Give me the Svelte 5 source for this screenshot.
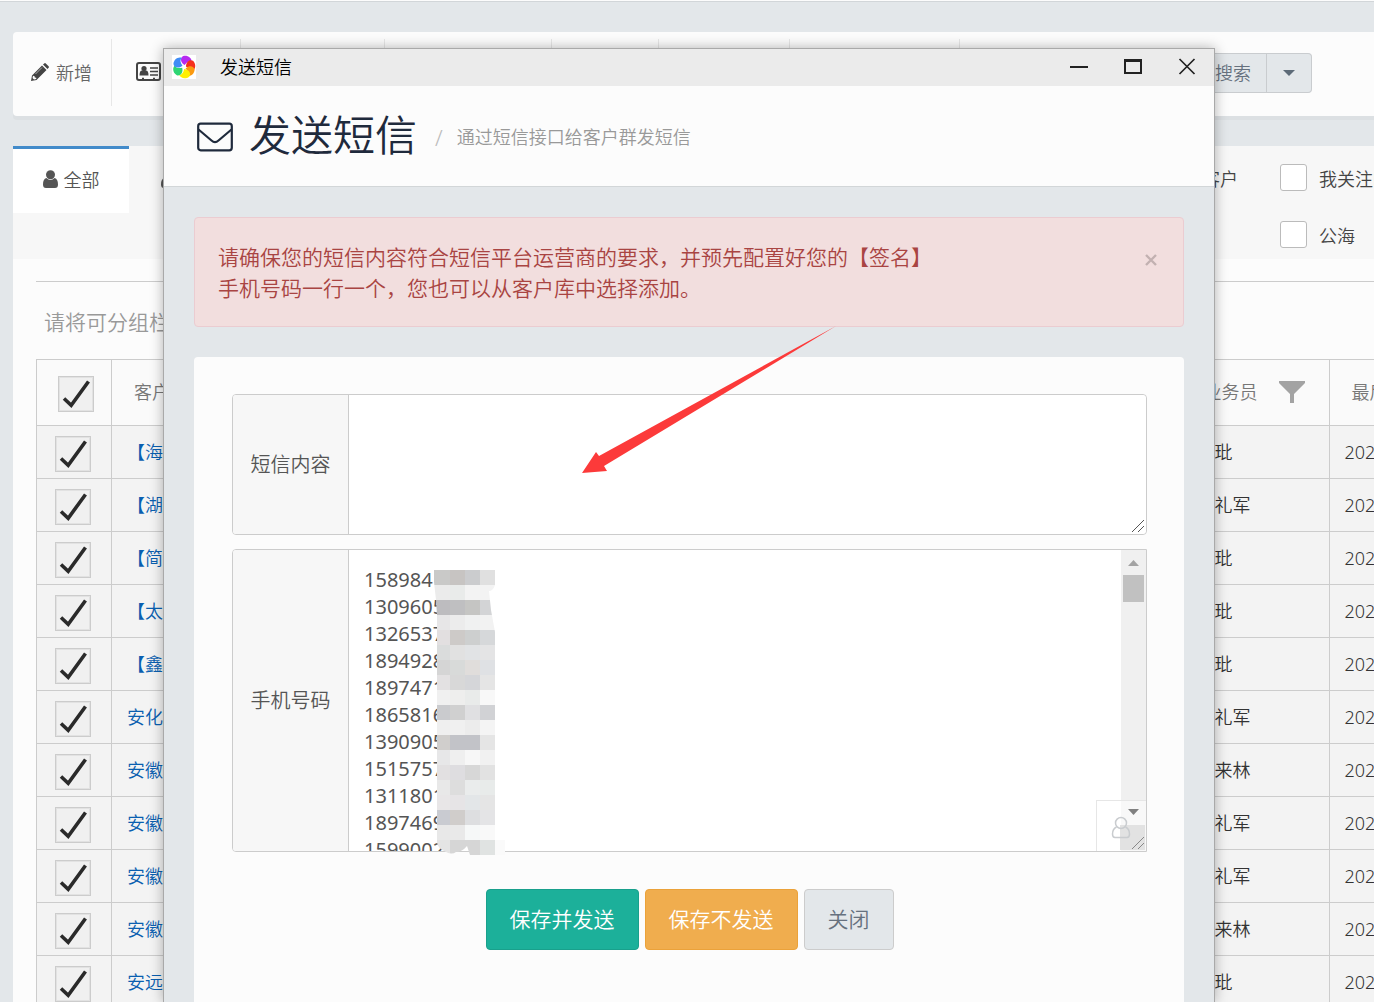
<script>
  const toolSlots = [129, 144, 167, 107, 131, 170];
  const rows = [
    ['【海南客户】', '张玭'],
    ['【湖南客户】', '周礼军'],
    ['【简单客户】', '张玭'],
    ['【太平客户】', '张玭'],
    ['【鑫源客户】', '张玭'],
    ['安化县客户', '周礼军'],
    ['安徽客户一', '周来林'],
    ['安徽华客户', '周礼军'],
    ['安徽省客户', '周礼军'],
    ['安徽新客户', '周来林'],
    ['安远县客户', '张玭']
  ];
  const phones = ['158984', '1309605', '1326537', '1894928', '1897471', '1865816', '1390905', '1515757', '1311801', '1897469', '1599002'].join('\n');
  const mosaic = [
    'c9c9c8 c7c4c2 cbccce e0e0e0',
    'ebebeb e9ebea f3f3f3 f3f3f3',
    'bdbcbf bfbfc1 c5c5c3 d3d4d6',
    'e7e6e7 ececec f0f1f1 f2f2f2',
    'e2dfe0 cdcac8 cdcfcf d6d8da',
    'dadcdc e1e1e1 e1e3e5 e4e4e5',
    'd5d5d5 d8dad9 e0dddb dfe1e4',
    'e3e1e2 d8d8d8 d5d6d9 e5e5e5',
    'f0f0f0 eeeeed e9ebea f8f8f8',
    'cacbce d0d0d0 e0e0e2 d1d2d5',
    'efefef f0f0f0 ececec f4f4f4',
    'd0cecc c2c3c8 c2c3c8 e5e5e5',
    'e7e7e8 efefef f7f7f7 f1f1f1',
    'e2e0e1 dedde0 d7d7d7 e2e2e2',
    'e8e8e8 dddddd eaecec e8ebea',
    'e8e6e7 e6e4e6 e3e6e8 e5e5e5',
    'c9cbd1 d0cdcb dddee0 e4e4e6',
    'e8e8e8 e9e9e9 f6f8f8 f9f9f9',
    'e4e4e4 d6d6d6 d6d6d6 e0e3e2'
  ].map((line) => line.split(' ').map((c) => '#' + c));
  const petals = [
    [20, '#b62af0'], [80, '#f5301c'], [128, '#fb9a10'], [176, '#fff000'], [245, '#2ed573'], [310, '#3f8cf5']
  ];
</script>

{#snippet check()}
  <svg class="tick" viewBox="0 0 36 36" aria-hidden="true">
    <path d="M6 22.500 L13.200 29.200 L30.500 5.500" fill="none" stroke="#2a2a2a" stroke-width="3.600" />
  </svg>
{/snippet}

{#snippet person()}
  <svg class="person" viewBox="0 0 15 18" aria-hidden="true">
    <circle cx="7.5" cy="4.7" r="4.5" fill="#555" />
    <path d="M3.4 8 C1 8.600 0 11 0 14.500 C0 17 1 18 3 18 H12 C14 18 15 17 15 14.500 C15 11 14 8.600 11.600 8 C9 10.600 6 10.600 3.400 8Z" fill="#555" />
  </svg>
{/snippet}

<div class="page">
  <nav class="toolbar">
    <button class="tool first">
      <svg width="18" height="18" viewBox="0 0 18 18" aria-hidden="true">
        <path d="M0 18 L1 12.500 L11 2.500 L15.500 7 L5.500 17Z M12 1.500 L13.200 .4 Q14 -.3 14.800 .4 L17.600 3.200 Q18.300 4 17.600 4.800 L16.500 6Z" fill="#444" />
        <path d="M2 12.800 L3.600 13.200 L3.800 14.500 L5.200 14.700 L5.300 16 L3 16.500 L1.500 15Z" fill="#fcfcfc" />
        <path d="M4.500 11 L11 4.500" stroke="#aaa" stroke-width="1" />
      </svg>
      <span>新增</span>
    </button>
    {#each toolSlots as w, i}
      <button class="tool" style:width="{w}px" aria-label="工具 {i + 1}">
        {#if i === 0}
          <svg width="25" height="19" viewBox="0 0 25 19" aria-hidden="true">
            <rect x="1" y="1" width="23" height="17" rx="2" fill="none" stroke="#444" stroke-width="2" />
            <circle cx="8" cy="6.500" r="2.600" fill="#444" />
            <path d="M3.500 13.500 Q3.500 8.500 6 8.500 H10 Q12.500 8.500 12.500 13.500Z" fill="#444" />
            <path d="M14 6 H22 M14 9.500 H22 M14 13 H22" stroke="#444" stroke-width="1.500" />
            <path d="M6 16.500 H8 M17 16.500 H19" stroke="#444" stroke-width="1.500" />
          </svg>
        {/if}
      </button>
    {/each}
    <div class="search">
      <button class="go">搜索</button>
      <button class="more" aria-label="更多"><svg width="12" height="6" viewBox="0 0 12 6"><path d="M0 0H12L6 6Z" fill="#5d6b78" /></svg></button>
    </div>
  </nav>

  <section class="tabs">
    <button class="tab active">{@render person()}<span>全部</span></button>
    <button class="tab" aria-label="客户分类">{@render person()}</button>
    <div class="filters">
      <span class="mine">客户</span>
      <label><input type="checkbox" /><span>我关注的</span></label>
      <label class="second"><input type="checkbox" /><span>公海</span></label>
    </div>
  </section>

  <main class="content">
    <p class="group">请将可分组栏拖到此处</p>
    <table>
      <colgroup><col class="c-check" /><col /><col class="c-sales" /><col class="c-date" /></colgroup>
      <thead>
        <tr>
          <th class="ch"><label class="box"><input type="checkbox" checked aria-label="全选" />{@render check()}</label></th>
          <th>客户名称</th>
          <th>
            <span class="sales">业务员
              <svg width="28" height="23" viewBox="0 0 28 23" aria-hidden="true"><path d="M1 0H27V2L16 13V22H12V13L1 2Z" fill="#a3a3a3" /></svg>
            </span>
          </th>
          <th>最后跟进</th>
        </tr>
      </thead>
      <tbody>
        {#each rows as [name, sales]}
          <tr>
            <td class="ch"><label class="box"><input type="checkbox" checked aria-label={name} />{@render check()}</label></td>
            <td><a href="#customer">{name}</a></td>
            <td>{sales}</td>
            <td>2021-01</td>
          </tr>
        {/each}
      </tbody>
    </table>
  </main>

  <div class="window" role="dialog" aria-label="发送短信">
    <header class="titlebar">
      <svg class="logo" viewBox="-12 -12 24 24" aria-hidden="true">
        <rect x="-12" y="-12" width="24" height="24" fill="#fff" />
        {#each petals as [angle, color]}
          <path d="M0 -2 C-5 -3 -7 -7 -4.500 -10 C-1 -12.500 4 -11.500 5.500 -7.500 C3 -8 1 -6 0 -2Z" fill={color} transform="rotate({angle})" />
        {/each}
      </svg>
      <span class="caption">发送短信</span>
      <button class="ctl" aria-label="最小化"><svg viewBox="0 0 18 18"><path d="M0 9H18" stroke="#222" stroke-width="2" /></svg></button>
      <button class="ctl" aria-label="最大化"><svg viewBox="0 0 18 18"><path d="M1 2V15H17V2" fill="none" stroke="#222" stroke-width="2" /><path d="M0 2.500H18" stroke="#222" stroke-width="3" /></svg></button>
      <button class="ctl" aria-label="关闭窗口"><svg viewBox="0 0 18 18"><path d="M1.500 1L16.500 16M16.500 1L1.500 16" stroke="#222" stroke-width="1.700" /></svg></button>
    </header>

    <div class="heading">
      <svg width="36" height="30" viewBox="0 0 36 30" aria-hidden="true">
        <rect x="1.200" y="1.700" width="33.600" height="26.600" rx="2.500" fill="none" stroke="#1f2a3c" stroke-width="2.200" />
        <path d="M1.500 7.500 L14.500 18.500 C17 20.800 19 20.800 21.500 18.500 L34.500 7.500" fill="none" stroke="#1f2a3c" stroke-width="2.200" />
      </svg>
      <h1>发送短信</h1>
      <small class="slash">/</small>
      <small>通过短信接口给客户群发短信</small>
    </div>

    <div class="body">
      <div class="alert" role="alert">
        <p>请确保您的短信内容符合短信平台运营商的要求，并预先配置好您的【签名】<br />手机号码一行一个，您也可以从客户库中选择添加。</p>
        <button aria-label="关闭提示"><svg width="12" height="12" viewBox="0 0 12 12"><path d="M1 1L11 11M11 1L1 11" stroke="#c2b1b1" stroke-width="2.400" /></svg></button>
        <svg class="arrow" width="254" height="148" viewBox="0 0 254 148" aria-hidden="true">
          <path d="M254 0 L17 130 L14 126 L0 147 L25 145 L22 140Z" fill="#fc3a3a" />
        </svg>
      </div>

      <form class="panel" onsubmit={(e) => e.preventDefault()}>
        <div class="field short">
          <label for="sms">短信内容</label>
          <textarea id="sms"></textarea>
          <svg class="grip" viewBox="0 0 12 12" aria-hidden="true"><path d="M0 12L12 0M6 12L12 6" stroke="#555" stroke-width="1" /></svg>
        </div>
        <div class="field tall">
          <label for="phones">手机号码</label>
          <textarea id="phones" value={phones}></textarea>
          <div class="bar" aria-hidden="true">
            <svg width="11" height="6" viewBox="0 0 11 6"><path d="M0 6H11L5.500 0Z" fill="#a3a3a3" /></svg>
            <span class="thumb"></span>
          </div>
          <svg class="mosaic" width="71" height="285" viewBox="0 0 71 285" aria-hidden="true">
            <clipPath id="smudge"><path d="M0 0H61V15Q59 21 55 21L57 40L61 62V270H71V285H36L33 276Q28 282 22 282Q18 285 12 282Q3 278 3 272V45L2 30L0 12Z" /></clipPath>
            <g clip-path="url(#smudge)">
              <rect x="61" y="270" width="10" height="15" fill="#fafafa" />
              {#each mosaic as line, r}
                {#each line as color, c}
                  <rect x={c ? 1 + c * 15 : 0} y={r * 15} width={c ? 15 : 16} height="15" fill={color} />
                {/each}
              {/each}
            </g>
          </svg>
          <button type="button" class="pick" aria-label="选择客户">
            <svg width="49" height="50" viewBox="0 0 49 50">
              <rect x="23" y="24" width="25" height="25" fill="#e2e2e2" />
              <path d="M31 8H42L36.500 14Z" fill="#808080" />
              <g fill="none" stroke="#c9cccf" stroke-width="1.500"><circle cx="24" cy="22" r="5.500" /><path d="M19.500 26Q15.500 28 15.500 33Q15.500 36.500 18 36.500H30Q32.500 36.500 32.500 33Q32.500 28 28.500 26" /></g>
              <path d="M35 48L47 36M41 48L47 42" stroke="#888" stroke-width="1" />
            </svg>
          </button>
        </div>
        <div class="actions">
          <button class="send">保存并发送</button>
          <button class="save">保存不发送</button>
          <button class="close">关闭</button>
        </div>
      </form>
    </div>
  </div>
</div>

<style>
  :global(body) { margin: 0; }
  .page, .page * { box-sizing: border-box; }
  .page {
    position: relative;
    height: 100vh;
    overflow: hidden;
    background: #e3e7ea;
    border-top: 1px solid #fcfcfc;
    box-shadow: inset 0 1px 0 #d2d6d9;
    padding: 31px 0 0 13px;
    font-family: "Noto Sans", "Noto Sans CJK SC", sans-serif;
    font-size: 18px;
    font-weight: 350;
    color: #444;
  }
  button { font: inherit; color: inherit; border: 0; background: none; padding: 0; margin: 0; display: flex; align-items: center; justify-content: center; }
  textarea { font: inherit; border: 0; outline: 0; resize: none; margin: 0; background: #fff; color: #555; overflow: hidden; }
  p, h1 { margin: 0; font-weight: inherit; }

  .toolbar { height: 84px; display: flex; padding: 7px 62px 10px 0; background: #fcfcfc; border-radius: 4px 0 0 4px; box-shadow: 0 4px 0 #dce0e3; }
  .tool { flex: none; border-right: 1px solid #e7e7e7; justify-content: flex-start; padding: 0 0 2px 24px; }
  .first { width: 99px; padding-left: 18px; gap: 7px; color: #666; }
  .search { margin: 14px 0 0 auto; height: 40px; display: flex; color: #66717e; }
  .search button { border: 1px solid #c9cccf; background: #e3e7ea; padding-bottom: 2px; }
  .search .go { width: 74px; justify-content: flex-end; padding-right: 15px; }
  .search .more { width: 45px; border-left: 0; border-radius: 0 4px 4px 0; padding: 0; }

  .tabs { margin-top: 30px; height: 113px; background: #f7f7f7; display: flex; align-items: flex-start; }
  .tab { height: 67px; width: 116px; gap: 6px; border-top: 3px solid transparent; color: #555; padding-bottom: 4px; }
  .tab:not(.active) { justify-content: flex-start; padding-left: 32px; }
  .active { background: #fff; border-top-color: #428bca; }
  .person { width: 15px; height: 18px; }
  .filters { margin: 18px 0 0 auto; display: grid; grid-template-columns: 66px 94px; row-gap: 30px; align-items: center; overflow: hidden; }
  .filters label { display: flex; align-items: center; gap: 12px; white-space: nowrap; height: 27px; }
  .filters input { appearance: none; flex: none; margin: 0; width: 27px; height: 27px; border: 1px solid #bbb; border-radius: 3px; background: #fff; }
  .filters .second { grid-column: 2; }
  .mine { margin-left: -12px; }

  .content { background: #fcfcfc; padding: 22px 0 0 23px; }
  .group { height: 78px; border-top: 1px solid #ccc; padding: 24px 0 0 8px; font-size: 21px; line-height: 32px; color: #999; }
  table { width: 100%; table-layout: fixed; border-collapse: collapse; background: #f3f3f3; color: #333; }
  .c-check { width: 75px; }
  .c-sales { width: 148px; }
  .c-date { width: 45px; }
  th, td { border: 1px solid #ccc; border-right-width: 0; overflow: hidden; white-space: nowrap; text-align: left; font-weight: inherit; padding: 0 0 1px 15px; height: 53px; line-height: 24px; }
  th { height: 66px; background: #fafafa; color: #777; padding-left: 22px; }
  td a { color: #0a5fb0; text-decoration: none; }
  .ch { padding: 0 0 0 18px; }
  th.ch { padding-left: 21px; }
  .sales { display: flex; align-items: center; gap: 20px; }
  .box { display: grid; width: 36px; height: 36px; margin-top: 3px; }
  .box input { appearance: none; grid-area: 1 / 1; margin: 0; border: 1px solid #ccc; background: #f0f0f0; box-shadow: inset 0 0 0 1px #e2e2e2; }
  .tick { grid-area: 1 / 1; width: 36px; height: 36px; }

  .window { position: absolute; top: 47px; left: 163px; right: 159px; bottom: 0; display: flex; flex-direction: column; border: 1px solid #a9a9a9; border-bottom: 0; background: #e3e7ea; box-shadow: 0 0 12px rgba(0, 0, 0, 0.3); }
  .titlebar { height: 37px; flex: none; display: flex; align-items: center; background: #ebebeb; padding: 0 18px 1px 8px; color: #000; }
  .logo { width: 24px; height: 24px; }
  .caption { margin: 0 auto 0 24px; padding-bottom: 3px; }
  .ctl { width: 18px; height: 18px; margin-left: 36px; }
  .ctl svg { width: 18px; height: 18px; }
  .heading { height: 101px; flex: none; display: flex; align-items: center; background: #fcfcfc; border-bottom: 1px solid #d2d6d8; padding: 2px 0 0 33px; color: #1f2a3c; }
  h1 { font-size: 42px; line-height: 60px; margin: 0 18px 4px 16px; }
  small { font-size: 18px; line-height: 24px; color: #999; }
  .slash { font-size: 22px; color: #bbb; margin-right: 14px; }
  .body { flex: 1; min-height: 0; padding: 30px; padding-bottom: 0; display: flex; flex-direction: column; gap: 30px; }
  .alert { position: relative; flex: none; display: flex; justify-content: space-between; align-items: flex-start; border: 1px solid #ebccd1; border-radius: 4px; background: #f2dede; color: #a94442; padding: 24px 26px 22px 23px; font-size: 21px; line-height: 31px; }
  .alert button { margin-top: 12px; }
  .arrow { position: absolute; left: 387px; top: 108px; z-index: 2; }
  .panel { flex: 1; min-height: 0; background: #fcfcfc; border-radius: 4px 4px 0 0; padding: 37px 37px 0 38px; }
  .field { position: relative; display: flex; border: 1px solid #ccc; border-radius: 4px; background: #fff; font-size: 20px; line-height: 27px; }
  .field label { width: 116px; flex: none; display: flex; align-items: center; justify-content: center; background: #f7f7f7; border-right: 1px solid #ccc; border-radius: 3px 0 0 3px; color: #555; }
  .field textarea { flex: 1; min-width: 0; padding: 16px 15px 0; border-radius: 4px; font-weight: 400; }
  .short { height: 141px; }
  .tall { height: 303px; margin-top: 14px; border-radius: 4px 0 0 4px; }
  .grip { position: absolute; right: 2px; bottom: 2px; width: 12px; height: 12px; }
  .bar { width: 25px; background: #f0f0f0; display: flex; flex-direction: column; align-items: center; padding-top: 10px; gap: 9px; }
  .thumb { width: 21px; height: 27px; background: #c1c1c1; }
  .mosaic { position: absolute; left: 201px; top: 20px; }
  .pick { position: absolute; right: 0; bottom: 0; width: 50px; height: 51px; border: 1px solid #e6e6e6; border-width: 1px 0 0 1px; background: rgba(255, 255, 255, 0.5); }
  .actions { display: flex; justify-content: center; gap: 6px; padding-top: 37px; }
  .actions button { height: 61px; padding: 0 23px; border: 1px solid; border-radius: 4px; font-size: 21px; line-height: 31px; color: #fff; }
  .actions .send { background: #1cb09a; border-color: #19a08c; }
  .actions .save { background: #f0ad4e; border-color: #eba23a; }
  .actions .close { background: #e3e7ea; border-color: #ccc; color: #66717e; }
</style>
